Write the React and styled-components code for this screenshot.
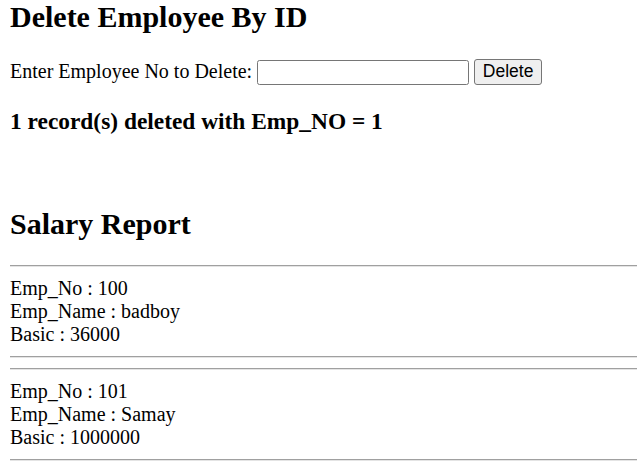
import React from "react";
import styled, { createGlobalStyle } from "styled-components";

const GlobalStyle = createGlobalStyle`
  body {
    margin: 0 0 0 10px;
    font-family: "Liberation Serif", "Times New Roman", serif;
    font-size: 20px;
    color: #000;
    background: #fff;
  }
`;

const records = [
  { no: 100, name: "badboy", basic: 36000 },
  { no: 101, name: "Samay", basic: 1000000 },
];

export default function App() {
  return (
    <Page>
      <GlobalStyle />
      <Title first>Delete Employee By ID</Title>
      <DeleteForm onSubmit={(e) => e.preventDefault()}>
        Enter Employee No to Delete: <TextInput type="text" /> <Button type="submit">Delete</Button>
      </DeleteForm>
      <Result>1 record(s) deleted with Emp_NO = 1</Result>
      <Spacer />
      <Title>Salary Report</Title>
      {records.map((r) => (
        <React.Fragment key={r.no}>
          <Divider />
          <Record>
            Emp_No : {r.no}
            <br />
            Emp_Name : {r.name}
            <br />
            Basic : {r.basic}
          </Record>
          <Divider />
        </React.Fragment>
      ))}
    </Page>
  );
}

const Page = styled.div`
  display: block;
`;

const Title = styled.h2`
  font-size: 30px;
  font-weight: bold;
  margin: ${(p) => (p.first ? "0" : "24.9px")} 0 24.9px;
`;

const DeleteForm = styled.form`
  margin: 0;
  line-height: normal;
`;

const TextInput = styled.input`
  width: 212px;
  height: 25px;
  box-sizing: border-box;
  padding: 1px 3px;
  border: 1.25px solid #767676;
  border-radius: 2.5px;
  font-family: "Liberation Sans", Arial, sans-serif;
  font-size: 16.67px;
  vertical-align: baseline;
`;

const Button = styled.button`
  width: 68px;
  height: 26px;
  box-sizing: border-box;
  padding: 1px 6px;
  border: 1.25px solid #767676;
  border-radius: 3px;
  background: #efefef;
  color: #000;
  font-family: "Liberation Sans", Arial, sans-serif;
  font-size: 17.5px;
`;

const Result = styled.h3`
  font-size: 23.4px;
  font-weight: bold;
  margin: 23.4px 0;
`;

const Spacer = styled.div`
  height: 23px;
`;

const Divider = styled.hr`
  margin: 10px 0;
  height: 0;
  border: none;
  border-top: 1px solid #a0a0a0;
  border-bottom: 1px solid #e4e4e4;
`;

const Record = styled.div`
  line-height: 23px;
`;
